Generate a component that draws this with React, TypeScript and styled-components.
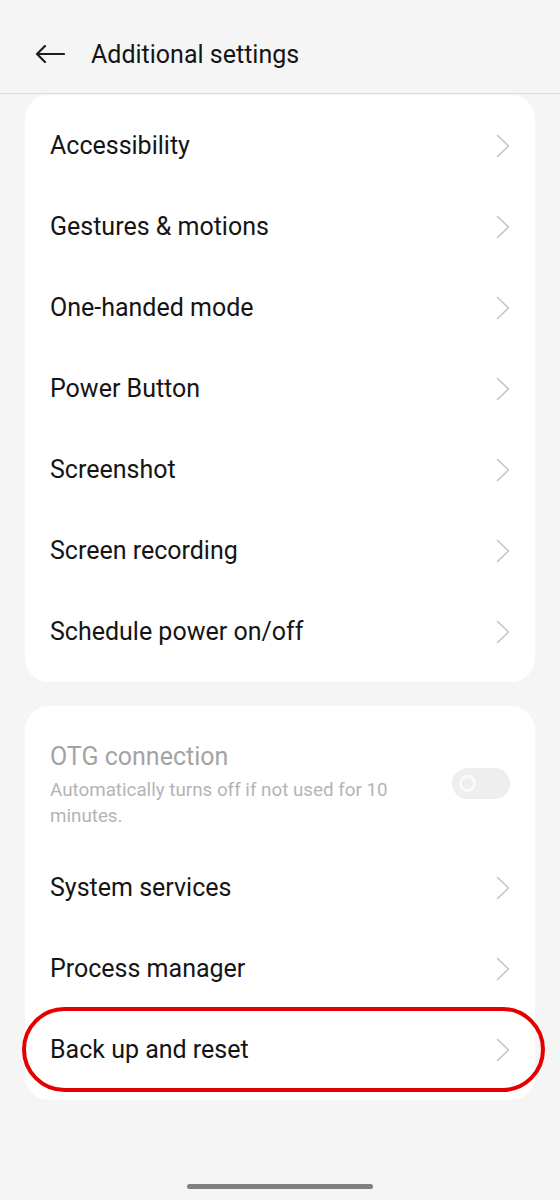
import * as React from 'react';
import styled, { createGlobalStyle } from 'styled-components';

const GlobalStyle = createGlobalStyle`
	body {
		margin: 0;
		background: #f5f5f5;
		font-family: Roboto, "Noto Sans", Arial, sans-serif;
	}
`;

const Screen = styled.div`
	width: 560px;
	height: 1200px;
	display: flex;
	flex-direction: column;
	background: #f5f5f5;
	overflow: hidden;
`;

const Header = styled.div`
	height: 78px;
	padding-top: 15px;
	display: flex;
	align-items: center;
	border-bottom: 1px solid #dcdcdc;
`;

const BackButton = styled.div`
	width: 91px;
	display: flex;
	justify-content: flex-start;
	padding-left: 35px;
	box-sizing: border-box;
`;

const Title = styled.h1`
	margin: 0;
	font-size: 25px;
	font-weight: 400;
	color: #151515;
`;

const Card = styled.div<{ $top: number }>`
	margin: ${p => p.$top}px 25px 0;
	background: #fff;
	border-radius: 24px;
	padding: 10px 0;
`;

const Row = styled.div`
	position: relative;
	height: 81px;
	display: flex;
	align-items: center;
	justify-content: space-between;
	padding: 0 25px;
`;

const Label = styled.span<{ $muted?: boolean }>`
	font-size: 25px;
	line-height: 30px;
	color: ${p => (p.$muted ? '#a3a3a3' : '#151515')};
`;

const ToggleRow = styled.div`
	display: flex;
	align-items: center;
	justify-content: space-between;
	padding: 26px 25px 18px;
`;

const TextBlock = styled.div`
	width: 380px;
	display: flex;
	flex-direction: column;
	gap: 5px;
`;

const Hint = styled.span`
	font-size: 18.8px;
	line-height: 26px;
	color: #b4b4b4;
`;

const Toggle = styled.div`
	width: 58px;
	height: 31px;
	border-radius: 16px;
	background: #eeeeee;
	display: flex;
	align-items: center;
	padding-left: 7px;
	box-sizing: border-box;
	margin-top: -4px;
`;

const Knob = styled.div`
	width: 11px;
	height: 11px;
	border-radius: 50%;
	border: 3px solid #fafafa;
`;

const Highlight = styled.div`
	position: absolute;
	left: -3px;
	right: -10px;
	top: -2px;
	bottom: -2px;
	border: 4px solid #e30000;
	border-radius: 44px;
	pointer-events: none;
`;

const HomeBar = styled.div`
	margin: auto auto 11px;
	width: 186px;
	height: 5px;
	border-radius: 3px;
	background: #7f7f7f;
`;

const Chevron = () => (
	<svg width="14" height="24" viewBox="0 0 14 24" fill="none">
		<polyline points="1.5,1.5 12.5,12 1.5,22.5" stroke="#c4c4c4" strokeWidth="1.6" strokeLinecap="round" strokeLinejoin="round" />
	</svg>
);

const BackArrow = () => (
	<svg width="30" height="18" viewBox="0 0 30 18" fill="none">
		<path d="M29 9H2M10 1L2 9L10 17" stroke="#1e1e1e" strokeWidth="2.2" strokeLinecap="round" strokeLinejoin="round" />
	</svg>
);

const mainItems = [
	'Accessibility',
	'Gestures & motions',
	'One-handed mode',
	'Power Button',
	'Screenshot',
	'Screen recording',
	'Schedule power on/off',
];

const moreItems = ['System services', 'Process manager', 'Back up and reset'];

export default function App() {
	return (
		<Screen>
			<GlobalStyle />
			<Header>
				<BackButton>
					<BackArrow />
				</BackButton>
				<Title>Additional settings</Title>
			</Header>
			<Card $top={1}>
				{mainItems.map(item => (
					<Row key={item}>
						<Label>{item}</Label>
						<Chevron />
					</Row>
				))}
			</Card>
			<Card $top={24}>
				<ToggleRow>
					<TextBlock>
						<Label $muted>OTG connection</Label>
						<Hint>Automatically turns off if not used for 10 minutes.</Hint>
					</TextBlock>
					<Toggle>
						<Knob />
					</Toggle>
				</ToggleRow>
				{moreItems.map(item => (
					<Row key={item}>
						<Label>{item}</Label>
						<Chevron />
						{item === 'Back up and reset' && <Highlight />}
					</Row>
				))}
			</Card>
			<HomeBar />
		</Screen>
	);
}
